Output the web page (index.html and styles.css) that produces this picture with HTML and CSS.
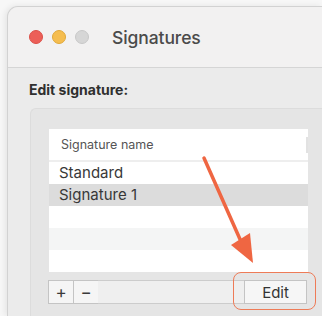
FILE: index.html
```html
<!DOCTYPE html>
<html lang="en">
<head>
    <meta charset="UTF-8">
    <meta name="viewport" content="width=device-width, initial-scale=1.0">
    <title>Signatures</title>
    <link rel="stylesheet" href="styles.css">
</head>
<body>
    <div class="window">
        <div class="titlebar">
            <div class="lights">
                <span class="light red"></span>
                <span class="light yellow"></span>
                <span class="light gray"></span>
            </div>
            <div class="title">Signatures</div>
        </div>

        <div class="content">
            <h2>Edit signature:</h2>

            <div class="group">
                <div class="table">
                    <div class="table-header">
                        <span>Signature name</span>
                        <span class="col-divider"></span>
                    </div>
                    <div class="row">Standard</div>
                    <div class="row selected">Signature 1</div>
                    <div class="row"></div>
                    <div class="row alt"></div>
                    <div class="row"></div>
                </div>

                <div class="toolbar">
                    <button class="tool-btn">+</button>
                    <button class="tool-btn">&minus;</button>
                    <div class="toolbar-fill"></div>
                    <button class="edit-btn">Edit</button>
                </div>
            </div>
        </div>
    </div>

    <!-- Annotation -->
    <div class="highlight"></div>
    <svg class="arrow" width="322" height="316" viewBox="0 0 322 316">
        <line x1="204" y1="158" x2="243" y2="246" stroke="#ef6642" stroke-width="3.5" stroke-linecap="round"/>
        <polygon points="231,245 250,233 253,263" fill="#ef6642"/>
    </svg>
</body>
</html>
```

FILE: styles.css
```css
body {
    margin: 0;
    font-family: Inter, "Noto Sans", sans-serif;
    background-color: #f7f7f7;
    height: 316px;
    overflow: hidden;
    position: relative;
}

.window {
    margin: 6px 0 0 7px;
    width: 315px;
    height: 310px;
    box-sizing: border-box;
    display: flex;
    flex-direction: column;
    background-color: #ebebeb;
    border: 1px solid #d2d2d2;
    border-right: none;
    border-bottom: none;
    border-radius: 11px 0 0 0;
    box-shadow: -2px 0 6px rgba(0, 0, 0, 0.08);
    overflow: hidden;
}

.titlebar {
    height: 60px;
    flex-shrink: 0;
    background-color: #f2f1f1;
    border-bottom: 1px solid #d5d5d5;
    display: flex;
    align-items: center;
    padding-left: 21px;
}

.lights {
    display: flex;
    gap: 9px;
}

.light {
    width: 14px;
    height: 14px;
    border-radius: 50%;
    box-sizing: border-box;
}

.light.red {
    background-color: #ec5f58;
    border: 1px solid #dc5049;
}

.light.yellow {
    background-color: #f5bd4f;
    border: 1px solid #e0a83a;
}

.light.gray {
    background-color: #d6d6d6;
    border: 1px solid #c8c8c8;
}

.title {
    margin-left: 23px;
    font-size: 17.5px;
    font-weight: 500;
    color: #4b4b4b;
    letter-spacing: -0.1px;
}

.content {
    flex-grow: 1;
    display: flex;
    flex-direction: column;
    padding: 13px 0 0 21px;
}

.content h2 {
    margin: 0 0 9px 0;
    font-size: 14px;
    font-weight: 700;
    color: #2f2f2f;
    line-height: 18px;
}

.group {
    flex-grow: 1;
    margin-left: 1px;
    padding: 20px 0 0 18px;
    background-color: #e5e5e5;
    border: 1px solid #dcdcdc;
    border-right: none;
    border-bottom: none;
    border-radius: 6px 0 0 0;
}

.table {
    width: 259px;
    background-color: #ffffff;
}

.table-header {
    height: 31px;
    border-bottom: 2px solid #eeeeee;
    display: flex;
    align-items: center;
    justify-content: space-between;
    padding-left: 12px;
    font-size: 12.5px;
    color: #555555;
}

.col-divider {
    width: 2px;
    height: 16px;
    background-color: #e2e2e2;
}

.row {
    height: 22px;
    line-height: 22px;
    padding-left: 10px;
    font-size: 15px;
    color: #383838;
}

.row.selected {
    background-color: #dcdcdc;
}

.row.alt {
    background-color: #f4f5f5;
}

.toolbar {
    display: flex;
    margin-top: 8px;
    width: 259px;
    height: 24px;
    margin-left: -1px;
}

.tool-btn {
    width: 26px;
    height: 24px;
    padding: 0;
    margin: 0;
    background-color: #f5f5f5;
    border: 1px solid #c4c4c4;
    margin-right: -1px;
    font-family: Inter, sans-serif;
    font-size: 17px;
    line-height: 20px;
    color: #3a3a3a;
}

.toolbar-fill {
    flex-grow: 1;
    background-color: #efefef;
    border-top: 1px solid #cccccc;
    border-bottom: 1px solid #cccccc;
}

.edit-btn {
    width: 63px;
    height: 24px;
    padding: 0;
    background-color: #f6f6f6;
    border: 1px solid #c4c4c4;
    font-family: Inter, sans-serif;
    font-size: 15px;
    color: #333333;
}

/* Annotation overlay */
.highlight {
    position: absolute;
    left: 233px;
    top: 272px;
    width: 81px;
    height: 36px;
    border: 1.5px solid #ee7b57;
    border-radius: 8px;
}

.arrow {
    position: absolute;
    left: 0;
    top: 0;
}
```
